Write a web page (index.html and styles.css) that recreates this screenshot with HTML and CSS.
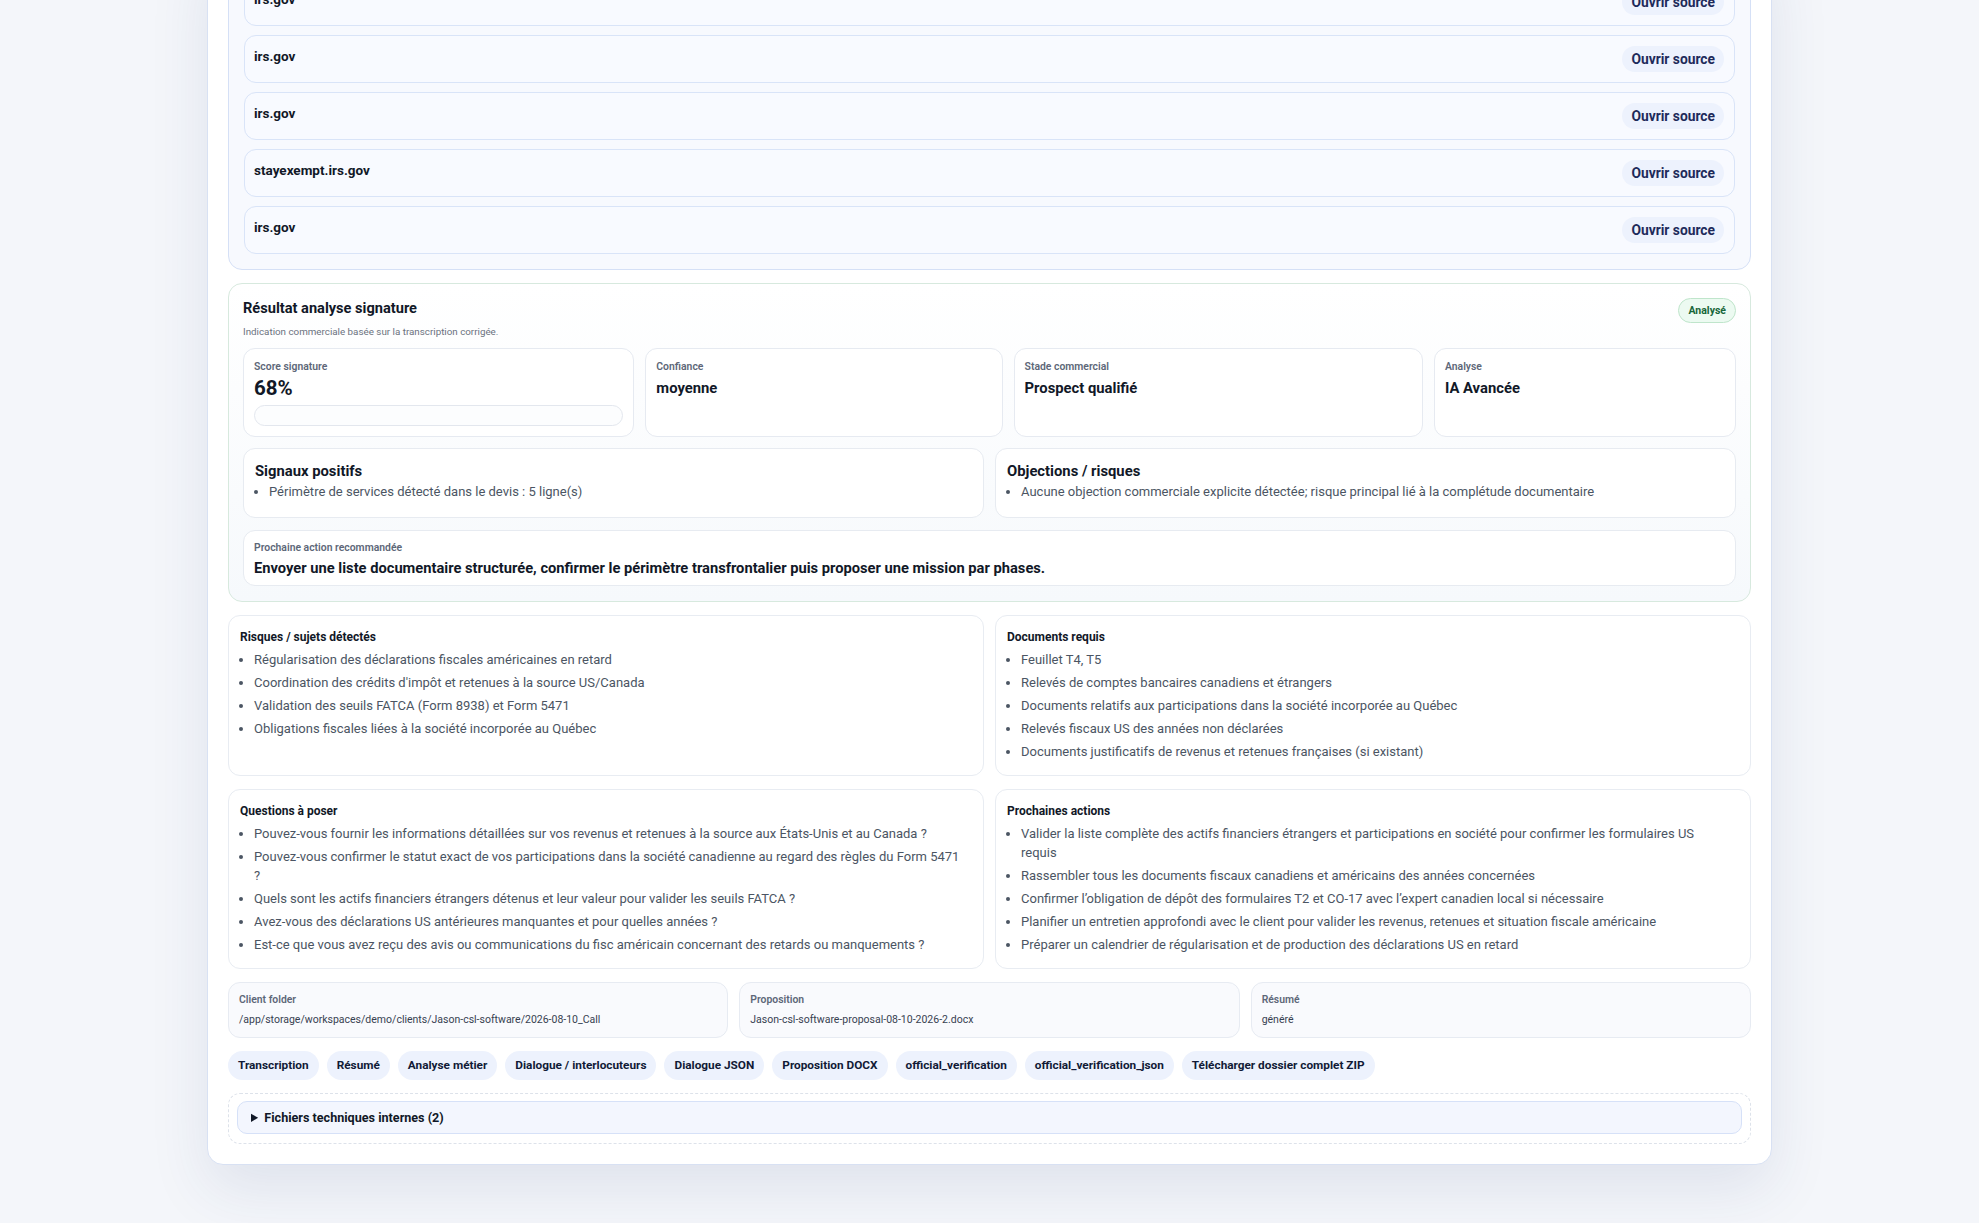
FILE: index.html
```html
<!DOCTYPE html>
<html lang="fr">
<head>
  <meta charset="UTF-8" />
  <meta name="viewport" content="width=device-width, initial-scale=1.0" />
  <title>Dossier client - Jason-csl-software</title>
  <link rel="stylesheet" href="styles.css">
</head>
<body>
  <main class="shell">

    <!-- sources officielles -->
    <section class="sources">
      <div class="source">
        <div class="source-info"><strong>irs.gov</strong></div>
        <a class="btn-soft" href="#">Ouvrir source</a>
      </div>
      <div class="source">
        <div class="source-info"><strong>irs.gov</strong></div>
        <a class="btn-soft" href="#">Ouvrir source</a>
      </div>
      <div class="source">
        <div class="source-info"><strong>irs.gov</strong></div>
        <a class="btn-soft" href="#">Ouvrir source</a>
      </div>
      <div class="source">
        <div class="source-info"><strong>stayexempt.irs.gov</strong></div>
        <a class="btn-soft" href="#">Ouvrir source</a>
      </div>
      <div class="source">
        <div class="source-info"><strong>irs.gov</strong></div>
        <a class="btn-soft" href="#">Ouvrir source</a>
      </div>
    </section>

    <!-- analyse signature -->
    <section class="signature">
      <div class="sig-head">
        <div>
          <h3>Résultat analyse signature</h3>
          <p class="muted">Indication commerciale basée sur la transcription corrigée.</p>
        </div>
        <span class="badge-ok">Analysé</span>
      </div>

      <div class="metrics">
        <div class="metric">
          <span class="label">Score signature</span>
          <strong class="value big">68%</strong>
          <div class="meter"></div>
        </div>
        <div class="metric">
          <span class="label">Confiance</span>
          <strong class="value">moyenne</strong>
        </div>
        <div class="metric">
          <span class="label">Stade commercial</span>
          <strong class="value">Prospect qualifié</strong>
        </div>
        <div class="metric">
          <span class="label">Analyse</span>
          <strong class="value">IA Avancée</strong>
        </div>
      </div>

      <div class="signals">
        <div class="box">
          <h4>Signaux positifs</h4>
          <ul>
            <li>Périmètre de services détecté dans le devis : 5 ligne(s)</li>
          </ul>
        </div>
        <div class="box">
          <h4>Objections / risques</h4>
          <ul>
            <li>Aucune objection commerciale explicite détectée; risque principal lié à la complétude documentaire</li>
          </ul>
        </div>
      </div>

      <div class="box next-action">
        <span class="label">Prochaine action recommandée</span>
        <strong>Envoyer une liste documentaire structurée, confirmer le périmètre transfrontalier puis proposer une mission par phases.</strong>
      </div>
    </section>

    <div class="grid-2">
      <div class="panel">
        <h5>Risques / sujets détectés</h5>
        <ul>
          <li>Régularisation des déclarations fiscales américaines en retard</li>
          <li>Coordination des crédits d'impôt et retenues à la source US/Canada</li>
          <li>Validation des seuils FATCA (Form 8938) et Form 5471</li>
          <li>Obligations fiscales liées à la société incorporée au Québec</li>
        </ul>
      </div>
      <div class="panel">
        <h5>Documents requis</h5>
        <ul>
          <li>Feuillet T4, T5</li>
          <li>Relevés de comptes bancaires canadiens et étrangers</li>
          <li>Documents relatifs aux participations dans la société incorporée au Québec</li>
          <li>Relevés fiscaux US des années non déclarées</li>
          <li>Documents justificatifs de revenus et retenues françaises (si existant)</li>
        </ul>
      </div>
    </div>

    <div class="grid-2">
      <div class="panel">
        <h5>Questions à poser</h5>
        <ul>
          <li>Pouvez-vous fournir les informations détaillées sur vos revenus et retenues à la source aux États-Unis et au Canada ?</li>
          <li>Pouvez-vous confirmer le statut exact de vos participations dans la société canadienne au regard des règles du Form 5471 ?</li>
          <li>Quels sont les actifs financiers étrangers détenus et leur valeur pour valider les seuils FATCA ?</li>
          <li>Avez-vous des déclarations US antérieures manquantes et pour quelles années ?</li>
          <li>Est-ce que vous avez reçu des avis ou communications du fisc américain concernant des retards ou manquements ?</li>
        </ul>
      </div>
      <div class="panel">
        <h5>Prochaines actions</h5>
        <ul>
          <li>Valider la liste complète des actifs financiers étrangers et participations en société pour confirmer les formulaires US requis</li>
          <li>Rassembler tous les documents fiscaux canadiens et américains des années concernées</li>
          <li>Confirmer l’obligation de dépôt des formulaires T2 et CO-17 avec l’expert canadien local si nécessaire</li>
          <li>Planifier un entretien approfondi avec le client pour valider les revenus, retenues et situation fiscale américaine</li>
          <li>Préparer un calendrier de régularisation et de production des déclarations US en retard</li>
        </ul>
      </div>
    </div>

    <div class="info-row">
      <div class="info">
        <span class="label">Client folder</span>
        <span class="info-value">/app/storage/workspaces/demo/clients/Jason-csl-software/2026-08-10_Call</span>
      </div>
      <div class="info">
        <span class="label">Proposition</span>
        <span class="info-value">Jason-csl-software-proposal-08-10-2026-2.docx</span>
      </div>
      <div class="info">
        <span class="label">Résumé</span>
        <span class="info-value">généré</span>
      </div>
    </div>

    <div class="chips">
      <a class="chip" href="#">Transcription</a>
      <a class="chip" href="#">Résumé</a>
      <a class="chip" href="#">Analyse métier</a>
      <a class="chip" href="#">Dialogue / interlocuteurs</a>
      <a class="chip" href="#">Dialogue JSON</a>
      <a class="chip" href="#">Proposition DOCX</a>
      <a class="chip" href="#">official_verification</a>
      <a class="chip" href="#">official_verification_json</a>
      <a class="chip" href="#">Télécharger dossier complet ZIP</a>
    </div>

    <div class="tech">
      <details>
        <summary>Fichiers techniques internes (2)</summary>
        <ul>
          <li>dialogue_raw.json</li>
          <li>pipeline_log.txt</li>
        </ul>
      </details>
    </div>

  </main>
</body>
</html>
```

FILE: styles.css
```css
* {
  box-sizing: border-box;
}
body {
  margin: 0;
  font-family: Roboto, Arial, sans-serif;
  color: #111827;
  background: #f4f6fa;
}
ul {
  margin: 0;
  padding-left: 14px;
}
h3, h4, h5, p {
  margin: 0;
}

.shell {
  max-width: 1565px;
  margin: -59px auto 60px;
  padding: 20px;
  background: #fff;
  border: 1px solid #d8e1f3;
  border-radius: 16px;
  box-shadow: 0 24px 60px rgba(40, 60, 120, 0.10);
  display: flex;
  flex-direction: column;
  gap: 13px;
}

/* sources */
.sources {
  background: #f7f9fe;
  border: 1px solid #d5e0f6;
  border-radius: 14px;
  padding: 15px;
  display: flex;
  flex-direction: column;
  gap: 9px;
}
.source {
  display: flex;
  align-items: center;
  justify-content: space-between;
  background: #f8faff;
  border: 1px solid #d9e4f8;
  border-radius: 12px;
  padding: 10px 10px 10px 9px;
}
.source strong {
  display: block;
  font-size: 13.5px;
  line-height: 18px;
  margin-bottom: 6px;
}
.btn-soft {
  display: inline-block;
  height: 26px;
  line-height: 26px;
  padding: 0 9px;
  border-radius: 999px;
  background: #edf2fd;
  color: #1e2a5a;
  font-size: 13.8px;
  font-weight: 700;
  text-decoration: none;
}

/* signature */
.signature {
  border: 1px solid #d7e9de;
  border-radius: 14px;
  padding: 15px 14px;
  background: linear-gradient(180deg, #ffffff, #f6f9fc);
}
.sig-head {
  display: flex;
  justify-content: space-between;
  align-items: flex-start;
}
.sig-head h3 {
  font-size: 14.6px;
  line-height: 18px;
  margin-bottom: 8px;
}
.muted {
  font-size: 9.8px;
  line-height: 14px;
  color: #6b7280;
}
.badge-ok {
  margin-top: -1px;
  height: 25px;
  line-height: 23px;
  padding: 0 9px;
  border-radius: 999px;
  border: 1px solid #bfe5cb;
  background: #ecfaf1;
  color: #17663a;
  font-size: 10.5px;
  font-weight: 700;
}
.label {
  display: block;
  font-size: 10.4px;
  line-height: 14px;
  font-weight: 600;
  color: #5d6778;
}
.metrics {
  display: grid;
  grid-template-columns: 390fr 356fr 408fr 301fr;
  gap: 11px;
  margin-top: 9px;
}
.metric {
  background: #fff;
  border: 1px solid #e6eaf1;
  border-radius: 12px;
  padding: 11px 10px 10px;
}
.value {
  display: block;
  margin-top: 3px;
  font-size: 14.8px;
  line-height: 22px;
}
.value.big {
  font-size: 20.5px;
}
.meter {
  margin-top: 6px;
  height: 21px;
  border: 1px solid #e3e7ee;
  border-radius: 999px;
  background: #fcfdfe;
}
.signals {
  display: grid;
  grid-template-columns: 1fr 1fr;
  gap: 11px;
  margin-top: 11px;
}
.box {
  background: #fff;
  border: 1px solid #e7ebf1;
  border-radius: 12px;
  padding: 13px 11px 16px;
}
.box h4 {
  font-size: 14.8px;
  line-height: 18px;
  margin-bottom: 3px;
}
.box li {
  font-size: 13px;
  line-height: 18px;
  color: #4b5563;
}
.next-action {
  margin-top: 12px;
  padding: 10px 10px 8px;
}
.next-action strong {
  display: block;
  margin-top: 4px;
  font-size: 14.7px;
  line-height: 18px;
}

/* listes */
.grid-2 {
  display: grid;
  grid-template-columns: 1fr 1fr;
  gap: 11px;
}
.panel {
  background: #fff;
  border: 1px solid #e8ecf2;
  border-radius: 12px;
  padding: 13px 20px 14px 11px;
}
.panel h5 {
  font-size: 12px;
  line-height: 16px;
  margin-bottom: 5px;
}
.panel li {
  font-size: 13px;
  line-height: 19px;
  color: #4b5563;
}
.panel li + li {
  margin-top: 4px;
}

/* fichiers */
.info-row {
  display: grid;
  grid-template-columns: repeat(3, 1fr);
  gap: 11px;
}
.info {
  background: #f9fafd;
  border: 1px solid #e7ebf2;
  border-radius: 12px;
  padding: 10px;
}
.info .label {
  line-height: 13px;
}
.info-value {
  display: block;
  margin-top: 6px;
  font-size: 10.5px;
  line-height: 15px;
  color: #374151;
}
.chips {
  display: flex;
  flex-wrap: wrap;
  gap: 8px;
}
.chip {
  height: 29px;
  line-height: 29px;
  padding: 0 10px;
  border-radius: 999px;
  background: #edf2fd;
  color: #111a36;
  font-size: 11.8px;
  font-weight: 700;
  text-decoration: none;
}
.tech {
  border: 1px dashed #dde2ea;
  border-radius: 12px;
  padding: 7px 8px 9px;
}
.tech summary {
  background: #f3f6fe;
  border: 1px solid #d6e1f8;
  border-radius: 10px;
  padding: 8px 13px;
  font-size: 12.6px;
  line-height: 15px;
  font-weight: 700;
  cursor: pointer;
}
.tech ul {
  margin-top: 8px;
  font-size: 11px;
  color: #4b5563;
}
```
